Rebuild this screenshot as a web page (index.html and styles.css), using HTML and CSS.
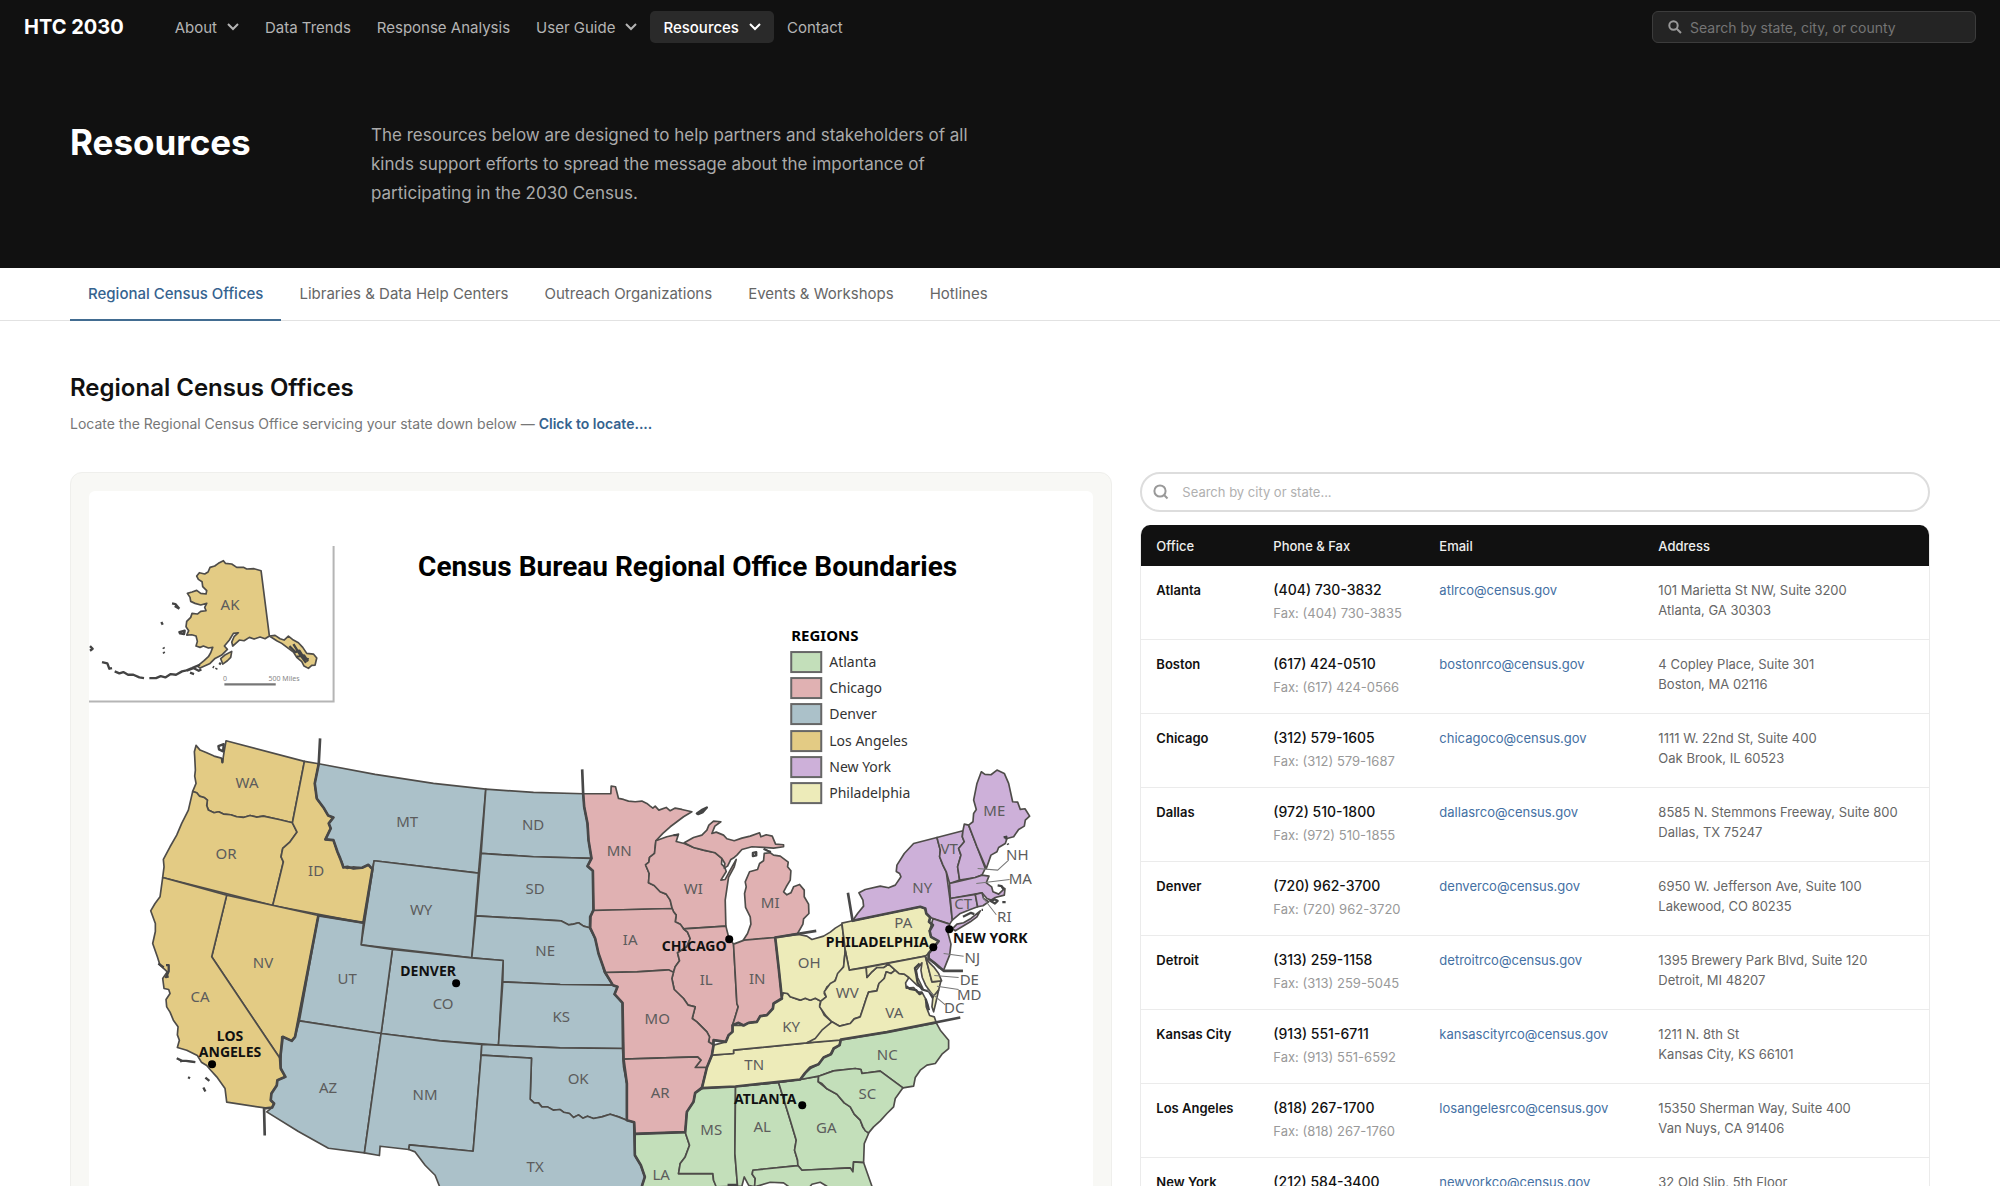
FILE: index.html
```html
<!DOCTYPE html>
<html lang="en">
<head>
<meta charset="utf-8">
<meta name="viewport" content="width=device-width, initial-scale=1">
<title>Resources – HTC 2030</title>
<link rel="stylesheet" href="styles.css">
</head>
<body>
<header class="topbar">
  <a class="brand" href="#">HTC 2030</a>
  <nav class="nav" aria-label="Main">
    <button class="nav-item" type="button">About <svg class="chevron" viewBox="0 0 12 8"><path d="M1 1l5 5 5-5"/></svg></button>
    <a class="nav-item" href="#">Data Trends</a>
    <a class="nav-item" href="#">Response Analysis</a>
    <button class="nav-item" type="button">User Guide <svg class="chevron" viewBox="0 0 12 8"><path d="M1 1l5 5 5-5"/></svg></button>
    <button class="nav-item is-active" type="button">Resources <svg class="chevron" viewBox="0 0 12 8"><path d="M1 1l5 5 5-5"/></svg></button>
    <a class="nav-item" href="#">Contact</a>
  </nav>
  <label class="site-search">
    <svg class="site-search-icon" viewBox="0 0 14 14"><circle cx="5.5" cy="5.5" r="4.2"/><path d="M8.7 8.7L13 13"/></svg>
    <input type="search" placeholder="Search by state, city, or county" aria-label="Search by state, city, or county">
  </label>
</header>

<section class="hero">
  <h1>Resources</h1>
  <p>The resources below are designed to help partners and stakeholders of all kinds support efforts to spread the message about the importance of participating in the 2030 Census.</p>
</section>

<nav class="tabs" aria-label="Resources">
  <a class="tab is-current" href="#">Regional Census Offices</a>
  <a class="tab" href="#">Libraries &amp; Data Help Centers</a>
  <a class="tab" href="#">Outreach Organizations</a>
  <a class="tab" href="#">Events &amp; Workshops</a>
  <a class="tab" href="#">Hotlines</a>
</nav>

<main class="content">
  <h2>Regional Census Offices</h2>
  <p class="lead">Locate the Regional Census Office servicing your state down below — <a href="#">Click to locate....</a></p>

  <div class="columns">
    <figure class="map-card">
      <svg class="map" viewBox="89 491 1004 760" role="img" aria-label="Census Bureau Regional Office Boundaries">
        <path class="inset" d="M333.500 546V701.500H89"/>
        <g transform="translate(80 540) scale(.33333)">
          <path class="state la" d="M430 62L436 70 455 72 470 82 490 82 500 87 522 86 543 92 568 288 555 296 540 291 522 297 508 292 492 302 478 300 458 318 455 306 462 290 475 278 460 280 448 300 433 318 442 328 425 345 405 355 390 370 360 384 352 378 372 362 385 350 392 338 398 322 385 324 370 318 360 322 348 318 352 304 348 288 335 284 320 285 326 272 318 260 320 244 332 232 336 220 352 222 362 214 378 212 374 202 380 190 362 195 345 190 332 184 330 172 322 160 336 156 350 151 362 160 378 162 380 152 368 140 366 125 355 118 350 108 358 98 374 102 384 96 390 82 404 78 415 70Z"/>
          <path class="state la" d="M568 288L585 286 600 296 612 300 625 288 640 300 655 308 668 322 680 340 700 342 710 354 705 375 695 376 685 385 672 378 665 365 650 352 640 336 625 325 605 310 590 302Z"/>
          <path class="state la" d="M422 356L436 344 455 334 452 352 442 362 428 372Z"/>
          <path class="islands" d="M628 318l18 18 12-4 14 22 14 4M640 312l16 26 22 30M650 350l22-4 12 18"/>
          <path class="islands" d="M298 276l16-4-2 10-12-2zM276 190l10 2 12 14M284 198l14 8M244 246l4 8M250 322l2 4M250 336l3 4M30 318l8 8-8 6M66 366l16 4 6 16 8-2M104 394l14 6 12-4 14 8 16 0 18 8 14 2M208 414l20 0 14-6 14 4 16-10 16 2 18-10 10-2 20-8 14-6 10-4M320 392l20-8 16 8 8-4M330 398l12 4M398 380l4 2M410 384l-2 4M418 374l4-6"/>
          <path class="scale-bar" d="M433 433H587"/>
        </g>

        <g transform="translate(60 720) scale(.33333)">
          <path class="state la" d="M408 76L420 90 440 98 462 108 484 114 487 128 492 96 498 62 733 124 697 308 660 299 610 288 590 291 570 286 550 292 530 290 512 284 490 282 476 275 462 278 445 270 440 256 442 240 432 232 418 228 410 218 398 214 408 190 404 168 406 150 404 110 403 95Z"/>
          <path class="state la" d="M398 214L410 218 418 228 432 232 442 240 440 256 445 270 462 278 476 275 490 282 512 284 530 290 550 292 570 286 590 291 610 288 660 299 697 308 711 336 690 365 668 385 663 410 670 425 638 556 308 472 312 440 310 418 330 380 350 345 365 310 385 270Z"/>
          <path class="state la" d="M733 124L776 131 764 190 770 235 790 262 804 286 820 292 806 310 812 325 796 358 820 360 832 395 840 414 846 426 850 442 862 440 880 445 906 443 925 434 937 447 910 608 638 556 670 425 663 410 668 385 690 365 711 336 697 308Z"/>
          <path class="state la" d="M500 525L775 586 705 950 695 962 668 950 660 1015 455 710Z"/>
          <path class="state la" d="M308 472L500 525 455 710 660 1015 662 1045 676 1070 652 1080 650 1096 634 1120 632 1140 642 1150 636 1162 620 1164 500 1146 495 1105 470 1070 452 1050 440 1036 424 1026 412 1006 380 990 352 982 358 960 352 944 354 920 340 900 330 876 320 860 318 838 330 820 326 808 312 805 308 775 322 755 300 735 292 710 278 670 286 634 286 610 272 572 285 550 300 530Z"/>
          <path class="islands" d="M475 78l16-6-2 22-12-6zM487 114v14M318 735l8 0 0 18-8 18 8-2M295 730l16 12M350 1014l16 8 12 0 14 2 14 2M366 1022l-6 2M384 1071l6 3M436 1072l12 10M430 1102l6 12"/>
        </g>

        <g transform="translate(300 720) scale(.33333)">
          <path class="state den" d="M56 131L225 163 400 190 557 207 535 459 222 422 217 447 205 434 186 443 160 440 142 445 130 440 126 426 120 414 112 395 100 360 76 358 92 325 86 310 100 292 84 286 70 262 50 235 44 190Z"/>
          <path class="state den" d="M222 422L535 459 515 713 183 674Z"/>
          <path class="state den" d="M557 207L700 217 850 221 852 260 862 310 865 360 874 415 700 410 543 400Z"/>
          <path class="state den" d="M543 400L700 410 874 415 862 438 878 452 880 570 870 590 868 623 850 618 835 608 820 612 805 614 782 602 527 587Z"/>
          <path class="state den" d="M527 587L782 602 805 614 820 612 835 608 850 618 868 623 885 655 900 700 912 755 938 795 780 793 608 785 609 721 515 713Z"/>
          <path class="state den" d="M277 688L515 713 609 721 595 975 420 962 243 940Z"/>
          <path class="state den" d="M608 785L780 793 938 795 955 800 943 822 967 848 967 985 780 983 595 975Z"/>
          <path class="state den" d="M55 586L190 608 183 674 277 688 243 940 -2 902Z"/>
          <path class="state den" d="M-2 902L243 940 193 1298 85 1284 -5 1234 -100 1175 -84 1162 -78 1150 -88 1140 -86 1120 -70 1096 -68 1080 -44 1070 -58 1045 -55 950 -25 962 -15 950Z"/>
          <path class="state den" d="M243 940L420 962 545 973 543 1005 519 1293 328 1274 326 1288 240 1278 238 1306 193 1298Z"/>
          <path class="state den" d="M545 973L780 983 967 985 970 1040 980 1090 980 1200 955 1190 930 1182 905 1190 880 1195 862 1188 848 1194 835 1184 820 1192 808 1180 790 1176 780 1168 760 1170 742 1160 725 1160 715 1148 702 1148 690 1137 694 1014 543 1005Z"/>
          <path class="state den" d="M543 1005L694 1014 690 1137 702 1148 715 1148 725 1160 742 1160 760 1170 780 1168 790 1176 808 1180 820 1192 835 1184 848 1194 862 1188 880 1195 905 1190 930 1182 955 1190 980 1200 1002 1206 1004 1305 1022 1335 1034 1370 1025 1398 1020 1440 940 1500 860 1560 840 1650 850 1700 780 1680 720 1560 660 1480 600 1470 560 1510 500 1470 450 1440 418 1398 405 1365 375 1335 345 1295 326 1288 328 1274 519 1293Z"/>
        </g>

        <g transform="translate(560 720) scale(.33333)">
          <path class="state chi" d="M69 221L152 221 153 198 166 200 175 235 190 238 205 243 225 245 245 243 260 250 270 258 278 264 285 258 296 270 318 262 330 272 345 264 365 268 395 275 370 290 350 305 330 320 308 340 287 362 283 400 268 412 266 426 256 434 267 460 265 488 282 496 300 515 318 522 330 540 336 565 100 571 98 452 82 438 94 415 85 360 82 310 72 260Z"/>
          <path class="state chi" d="M287 362L320 350 355 342 348 364 372 370 400 382 430 390 465 398 485 415 484 432 494 442 498 454 482 480 495 478 510 450 528 418 522 440 505 472 495 540 497 618 370 626 360 612 345 605 348 585 340 575 336 565 330 540 318 522 300 515 282 496 265 488 267 460 256 434 266 426 268 412 283 400Z"/>
          <path class="state chi" d="M372 368L400 352 425 345 440 330 446 315 460 303 482 305 464 318 455 340 468 336 490 345 500 356 522 362 545 354 570 348 598 338 602 350 618 344 636 348 646 372 670 374 670 380 640 384 610 382 575 380 545 388 530 405 522 412 512 418 502 438 492 444 494 430 485 415 465 398 430 390 400 382Z"/>
          <path class="state chi" d="M548 662L562 640 572 612 570 590 556 562 553 520 558 500 555 485 568 455 592 448 598 430 610 422 612 400 630 398 640 405 660 408 684 426 682 440 692 452 690 480 678 500 670 515 680 524 692 518 700 500 718 493 732 510 732 530 745 552 746 580 730 596 728 612 712 640 645 652Z"/>
          <path class="state chi" d="M98 571L336 565 340 575 348 585 345 605 360 612 370 626 382 636 390 655 380 680 352 698 358 722 345 740 340 756 335 760 325 749 230 755 135 757 115 700 105 655 90 623 92 590Z"/>
          <path class="state chi" d="M370 626L497 618 505 650 520 672 525 760 530 850 534 860 525 890 517 915 517 935 505 945 497 965 460 960 458 972 445 965 448 950 440 935 410 905 396 895 405 860 384 855 370 835 342 808 335 775 340 756 345 740 358 722 352 698 380 680 390 655 382 636Z"/>
          <path class="state chi" d="M520 672L552 660 645 652 655 740 665 835 640 850 638 865 620 885 600 888 590 905 565 908 550 916 535 908 517 915 525 890 534 860 530 850Z"/>
          <path class="state chi" d="M135 757L230 755 325 749 340 756 335 775 342 808 370 835 384 855 405 860 396 895 410 905 440 935 448 950 445 965 460 975 455 1005 440 1042 405 1042 422 1020 412 1010 190 1017 187 848 163 822 172 800 158 795Z"/>
          <path class="state chi" d="M190 1017L412 1010 422 1020 405 1042 440 1042 425 1100 405 1118 400 1145 380 1175 375 1236 225 1241 222 1206 200 1200 200 1090 192 1040Z"/>
          <path class="state atl" d="M225 1241L375 1236 388 1275 375 1310 360 1330 355 1360 458 1360 460 1380 470 1400 480 1450 400 1470 245 1440 245 1398 254 1370 242 1335 224 1305Z"/>
          <path class="state atl" d="M425 1104L526 1099 524 1300 532 1398 468 1400 460 1380 458 1360 355 1360 360 1330 375 1310 388 1275 375 1236 380 1175 400 1145 405 1118Z"/>
          <path class="state atl" d="M526 1099L655 1087 690 1200 708 1260 703 1290 712 1320 713 1336 578 1350 576 1362 585 1375 583 1400 565 1395 552 1370 545 1398 532 1398 524 1300Z"/>
          <path class="state atl" d="M655 1087L720 1078 775 1068 774 1085 800 1106 830 1122 852 1148 870 1160 882 1182 900 1200 908 1222 925 1240 912 1270 910 1327 880 1325 878 1355 870 1343 725 1350 713 1336 712 1320 703 1290 708 1260 690 1200Z"/>
          <path class="state atl" d="M578 1350L713 1336 725 1350 870 1343 878 1355 880 1325 910 1327 935 1398 980 1500 960 1600 880 1520 840 1440 800 1398 780 1386 755 1392 740 1410 700 1410 670 1388 630 1386 583 1400 585 1375 576 1362Z"/>
          <path class="state phi" d="M455 1005L520 1000 520 990 740 968 842 958 838 975 820 985 812 1002 790 1012 775 1032 750 1042 735 1058 720 1078 655 1087 526 1099 425 1104 440 1042Z"/>
          <path class="state phi" d="M460 975L497 965 505 945 517 935 517 915 550 916 565 908 590 905 600 888 620 885 638 865 640 850 665 835 668 818 682 820 690 830 720 840 735 834 750 840 765 834 782 843 778 855 792 885 815 905 800 920 785 945 760 962 740 968 520 990 520 1000 455 1005Z"/>
          <path class="state phi" d="M645 652L715 643 740 648 755 658 790 648 810 636 825 624 845 612 855 690 850 740 830 770 822 785 800 800 792 820 798 830 782 843 765 834 750 840 735 834 720 840 690 830 682 820 668 818 665 835 655 740Z"/>
          <path class="islands" d="M410 280l14-10 16-8-12 14-14 6zM578 398l10-2 0 10-10 2zM610 386l12 6 10 4M340 345l14 0M502 1394l30 0"/>
        </g>

        <g transform="translate(780 740) scale(.33333)">
          <path class="state phi" d="M185 549L217 542 420 500 435 505 438 520 450 532 446 545 458 555 448 572 452 590 475 603 462 620 445 640 435 648 207 690 195 630Z"/>
          <path class="state phi" d="M195 630L207 690 258 682 260 712 275 695 290 682 310 682 325 672 345 690 332 700 318 695 312 715 296 730 290 752 265 756 258 775 250 800 240 830 222 836 210 850 178 858 155 845 138 828 118 800 122 783 138 770 132 755 150 730 165 722 172 700 190 680Z"/>
          <path class="state phi" d="M345 690L356 700 372 702 386 712 376 728 378 744 400 742 410 755 425 756 436 776 438 800 448 826 462 830 468 848 320 876 180 900 80 908 105 895 125 870 155 845 178 858 210 850 222 836 240 830 250 800 258 775 265 756 290 752 296 730 312 715 318 695 332 700Z"/>
          <path class="state phi" d="M258 682L435 648 455 725 482 722 475 750 462 770 450 755 436 735 426 712 422 690 425 668 408 690 412 712 428 745 410 735 386 712 372 702 356 700 345 690 325 672 310 682 290 682 275 695 260 712Z"/>
          <path class="state phi" d="M435 648L446 666 460 680 475 700 484 722 455 725Z"/>
          <path class="state phi" d="M475 750L466 790 460 815 455 800 458 770Z"/>
          <path class="state atl" d="M468 848L480 870 505 900 505 925 485 942 465 970 440 975 420 990 405 1012 400 1038 368 1043 300 993 245 1000 242 988 225 985 160 992 115 1008 60 1018 75 998 90 985 115 972 130 952 155 940 162 925 178 915 180 900 320 876Z"/>
          <path class="state atl" d="M115 1008L160 992 225 985 242 988 245 1000 300 993 368 1043 345 1075 340 1100 320 1120 300 1142 280 1160 265 1178 255 1172 248 1160 240 1140 222 1122 210 1100 192 1088 170 1062 140 1046 125 1030 114 1025Z"/>
          <path class="state ny" d="M217 542L232 520 250 498 248 480 236 458 255 448 300 438 325 443 345 435 362 410 358 400 348 394 350 375 372 340 400 310 470 292 480 330 478 350 488 375 498 395 508 470 516 540 508 552 450 532 438 520 435 505 420 500Z"/>
          <path class="state ny" d="M516 566L530 552 550 548 572 535 600 512 590 530 570 545 545 560 525 572Z"/>
          <path class="state ny" d="M458 536L508 552 502 575 512 612 508 645 490 690 475 682 462 668 445 655 445 640 475 603 452 590 448 572Z"/>
          <path class="state ny" d="M470 292L548 272 546 290 552 305 535 325 542 345 532 380 538 420 508 430 498 395 488 375 478 350 480 330Z"/>
          <path class="state ny" d="M548 272L552 252 565 255 590 320 615 385 605 405 585 412 538 420 532 380 542 345 535 325 552 305 546 290Z"/>
          <path class="state ny" d="M565 255L578 245 580 220 588 208 580 180 590 130 603 95 614 103 632 104 650 90 672 100 685 130 697 185 712 186 720 208 734 206 748 228 735 240 732 258 715 268 700 290 680 295 675 310 655 322 650 335 632 345 618 385 590 320Z"/>
          <path class="state ny" d="M508 430L585 412 605 405 626 408 618 428 634 440 638 455 655 462 670 448 664 440 674 446 672 465 645 472 632 480 620 475 605 458 510 475Z"/>
          <path class="state ny" d="M510 475L585 463 592 500 570 508 540 520 516 540Z"/>
          <path class="state ny" d="M585 463L605 458 610 475 625 485 608 497 592 500Z"/>
          <path class="islands" d="M652 436l12 2 6 10M630 482l14-4 8 4-8 8zM666 486l10 0M604 509l4 0M548 530l24-12 10 4M670 292l8-2 0 8M682 310l2 4M418 670l-14 14 4 20 4 24 14 20 20 6 12 20M378 738l10 8 20 4 10 12 8-4M436 776l6 18 4 16"/>
          <path class="leader" d="M592 385L652 390 685 360M588 430L688 418M606 470L648 524M490 640L550 648M462 706L535 712M470 738L535 748M440 748L495 794"/>
        </g>

        <g transform="translate(560 720) scale(.33333)">
          <path class="border" d="M66 148L69 221 72 260 82 310 85 360 94 415 82 438 98 452 100 570 90 590 90 623 105 655 115 700 135 757 158 795 172 800 163 822 187 848 190 1017 200 1090 200 1200 222 1206 224 1305 242 1335 254 1370 245 1398"/>
          <path class="border" d="M768 632L645 652 655 740 665 835 640 850 638 865 620 885 600 888 590 905 565 908 550 916 535 908 517 915 517 935 505 945 497 965 460 960 460 975 455 1005 440 1042 425 1104 405 1118 400 1145 380 1175 375 1236 225 1241"/>
          <path class="border" d="M425 1104L526 1099 720 1078 735 1058 750 1042 775 1032 790 1012 812 1002 820 985 838 975 842 958 980 936 1200 892"/>
          <path class="border" d="M863 518L877 602 1080 560 1095 565 1098 580 1110 592 1106 605 1118 615 1108 632 1112 650 1135 663 1122 680 1105 700 1105 715 1122 728 1150 752 1208 752"/>
          <path class="border" d="M-720 55L-724 131 -736 190 -730 235 -710 262 -696 286 -680 292 -694 310 -688 325 -704 358 -680 360 -668 395 -660 414 -650 442 -638 440 -620 445 -594 443 -575 434 -563 447 -590 608 -725 586 -795 950 -805 962 -832 950 -840 1015 -838 1045 -824 1070 -848 1080 -850 1096 -866 1120 -868 1140 -858 1150 -864 1162 -888 1165 -886 1246"/>
        </g>

        <g class="dots">
          <circle cx="212" cy="1064" r="4"/><circle cx="456" cy="983" r="4"/><circle cx="729" cy="939" r="4"/><circle cx="802" cy="1105" r="4"/><circle cx="949" cy="929" r="4"/><circle cx="933" cy="947" r="4"/>
        </g>

        <g class="abbr">
          <text x="230" y="610">AK</text>
          <text x="247" y="788">WA</text><text x="226" y="859">OR</text><text x="316" y="876">ID</text><text x="263" y="968">NV</text><text x="200" y="1002">CA</text>
          <text x="347" y="984">UT</text><text x="328" y="1093">AZ</text><text x="407" y="827">MT</text><text x="533" y="830">ND</text><text x="535" y="894">SD</text><text x="421" y="915">WY</text><text x="545" y="956">NE</text><text x="443" y="1009">CO</text><text x="561" y="1022">KS</text><text x="578" y="1084">OK</text><text x="425" y="1100">NM</text><text x="535" y="1172">TX</text>
          <text x="619" y="856">MN</text><text x="693" y="894">WI</text><text x="770" y="908">MI</text><text x="630" y="945">IA</text><text x="706" y="985">IL</text><text x="757" y="984">IN</text><text x="657" y="1024">MO</text><text x="660" y="1098">AR</text>
          <text x="791" y="1032">KY</text><text x="754" y="1070">TN</text><text x="809" y="968">OH</text><text x="847" y="998">WV</text><text x="903" y="928">PA</text><text x="894" y="1018">VA</text>
          <text x="711" y="1135">MS</text><text x="762" y="1132">AL</text><text x="826" y="1133">GA</text><text x="661" y="1180">LA</text><text x="867" y="1099">SC</text><text x="887" y="1060">NC</text>
          <text x="922" y="893">NY</text><text x="949" y="854">VT</text><text x="994" y="816">ME</text><text x="963" y="909">CT</text><text x="1017" y="860">NH</text><text x="1020" y="884">MA</text><text x="1004" y="922">RI</text><text x="972" y="963">NJ</text><text x="969" y="985">DE</text><text x="969" y="1000">MD</text><text x="954" y="1013">DC</text>
        </g>
        <g class="city">
          <text x="230" y="1041">LOS</text><text x="230" y="1057">ANGELES</text><text x="428" y="976">DENVER</text><text x="694" y="951">CHICAGO</text><text x="765" y="1104">ATLANTA</text><text x="877" y="947">PHILADELPHIA</text><text x="990" y="943">NEW YORK</text>
        </g>
        <g class="scale-text"><text x="225" y="681">0</text><text x="284" y="681">500 Miles</text></g>

        <text class="map-title" x="418" y="576">Census Bureau Regional Office Boundaries</text>
        <text class="legend-title" x="791" y="641">REGIONS</text>
        <g class="legend">
          <rect class="atl" x="791" y="652" width="30" height="20"/><text x="829" y="667">Atlanta</text>
          <rect class="chi" x="791" y="678" width="30" height="20"/><text x="829" y="693">Chicago</text>
          <rect class="den" x="791" y="704" width="30" height="20"/><text x="829" y="719">Denver</text>
          <rect class="la" x="791" y="731" width="30" height="20"/><text x="829" y="746">Los Angeles</text>
          <rect class="ny" x="791" y="757" width="30" height="20"/><text x="829" y="772">New York</text>
          <rect class="phi" x="791" y="783" width="30" height="20"/><text x="829" y="798">Philadelphia</text>
        </g>
      </svg>
    </figure>

    <section class="offices" aria-label="Offices">
      <label class="office-search">
        <svg class="office-search-icon" viewBox="0 0 16 16"><circle cx="7" cy="7" r="5.600"/><path d="M11.300 11.300L14.500 14.500"/></svg>
        <input type="search" placeholder="Search by city or state..." aria-label="Search by city or state">
      </label>
      <div class="table-wrap">
        <table>
          <thead>
            <tr><th class="col-office">Office</th><th class="col-phone">Phone &amp; Fax</th><th class="col-email">Email</th><th>Address</th></tr>
          </thead>
          <tbody>
            <tr><th scope="row">Atlanta</th><td class="phone">(404) 730-3832<span class="fax">Fax: (404) 730-3835</span></td><td><a href="#">atlrco@census.gov</a></td><td>101 Marietta St NW, Suite 3200<br>Atlanta, GA 30303</td></tr>
            <tr><th scope="row">Boston</th><td class="phone">(617) 424-0510<span class="fax">Fax: (617) 424-0566</span></td><td><a href="#">bostonrco@census.gov</a></td><td>4 Copley Place, Suite 301<br>Boston, MA 02116</td></tr>
            <tr><th scope="row">Chicago</th><td class="phone">(312) 579-1605<span class="fax">Fax: (312) 579-1687</span></td><td><a href="#">chicagoco@census.gov</a></td><td>1111 W. 22nd St, Suite 400<br>Oak Brook, IL 60523</td></tr>
            <tr><th scope="row">Dallas</th><td class="phone">(972) 510-1800<span class="fax">Fax: (972) 510-1855</span></td><td><a href="#">dallasrco@census.gov</a></td><td>8585 N. Stemmons Freeway, Suite 800<br>Dallas, TX 75247</td></tr>
            <tr><th scope="row">Denver</th><td class="phone">(720) 962-3700<span class="fax">Fax: (720) 962-3720</span></td><td><a href="#">denverco@census.gov</a></td><td>6950 W. Jefferson Ave, Suite 100<br>Lakewood, CO 80235</td></tr>
            <tr><th scope="row">Detroit</th><td class="phone">(313) 259-1158<span class="fax">Fax: (313) 259-5045</span></td><td><a href="#">detroitrco@census.gov</a></td><td>1395 Brewery Park Blvd, Suite 120<br>Detroit, MI 48207</td></tr>
            <tr><th scope="row">Kansas City</th><td class="phone">(913) 551-6711<span class="fax">Fax: (913) 551-6592</span></td><td><a href="#">kansascityrco@census.gov</a></td><td>1211 N. 8th St<br>Kansas City, KS 66101</td></tr>
            <tr><th scope="row">Los Angeles</th><td class="phone">(818) 267-1700<span class="fax">Fax: (818) 267-1760</span></td><td><a href="#">losangelesrco@census.gov</a></td><td>15350 Sherman Way, Suite 400<br>Van Nuys, CA 91406</td></tr>
            <tr><th scope="row">New York</th><td class="phone">(212) 584-3400</td><td><a href="#">newyorkco@census.gov</a></td><td>32 Old Slip, 5th Floor</td></tr>
          </tbody>
        </table>
      </div>
    </section>
  </div>
</main>
</body>
</html>
```
FILE: styles.css
```css
* { box-sizing: border-box; }

body {
  margin: 0;
  background: #fff;
  color: #111;
  font-family: Inter, "Liberation Sans", sans-serif;
  font-size: 14px;
}

a { color: inherit; text-decoration: none; }
button, input { font: inherit; }

/* Top bar */
.topbar {
  display: flex;
  align-items: center;
  height: 54px;
  padding: 0 24px;
  background: #111;
}
.brand { margin-right: 38px; color: #fff; font-size: 20px; font-weight: 700; }
.nav { display: flex; align-items: center; }
.nav-item {
  display: flex;
  align-items: center;
  gap: 10px;
  height: 32px;
  padding: 0 13px;
  border: 0;
  border-radius: 5px;
  background: none;
  color: #b4b4b4;
  font-size: 15px;
  font-weight: 400;
  white-space: nowrap;
}
.nav-item.is-active { background: #2a2a2a; color: #fff; font-weight: 500; }
.chevron { width: 12px; height: 8px; fill: none; stroke: currentColor; stroke-width: 2; }
.site-search {
  display: flex;
  align-items: center;
  gap: 8px;
  width: 324px;
  height: 32px;
  margin-left: auto;
  padding: 0 15px;
  border: 1px solid #3c3c3c;
  border-radius: 6px;
  background: #242424;
}
.site-search-icon { width: 14px; height: 14px; fill: none; stroke: #999; stroke-width: 2; }
.site-search input, .office-search input {
  flex: 1;
  min-width: 0;
  padding: 0;
  border: 0;
  outline: 0;
  background: none;
}
.site-search input { color: #fff; font-size: 14px; }
.site-search input::placeholder { color: #757575; opacity: 1; }

/* Hero */
.hero {
  display: grid;
  grid-template-columns: 181px 1fr;
  gap: 120px;
  padding: 67px 70px 60px;
  background: #111;
}
.hero h1 { margin: 0; color: #fff; font-size: 35px; line-height: 42px; font-weight: 700; }
.hero p { max-width: 600px; margin: 0; color: #aaa; font-size: 17px; line-height: 29px; }

/* Tabs */
.tabs { display: flex; height: 53px; padding: 0 70px; border-bottom: 1px solid #e2e2e2; }
.tab {
  display: flex;
  align-items: center;
  margin-bottom: -1px;
  padding: 0 18px;
  border-bottom: 2px solid transparent;
  color: #666;
  font-size: 15px;
}
.tab.is-current { border-color: #426c91; color: #35638f; font-weight: 500; }

/* Content */
.content { padding: 50px 70px 60px; }
.content h2 { margin: 0; font-size: 24px; line-height: 34px; font-weight: 600; }
.lead { margin: 8px 0 37px; color: #777; line-height: 22px; }
.lead a { color: #35638f; font-weight: 600; }
.columns { display: grid; grid-template-columns: 1.32fr 1fr; gap: 28px; align-items: start; }

/* Map */
.map-card {
  margin: 0;
  padding: 18px;
  border: 1px solid #efefec;
  border-radius: 12px;
  background: #f8f8f5;
}
.map { display: block; width: 100%; border-radius: 6px; background: #fff; font-family: "Noto Sans", sans-serif; }
.atl { fill: #c3dfba; }
.chi { fill: #e0b1b2; }
.den { fill: #abc1c9; }
.la { fill: #e3cb84; }
.ny { fill: #cdb0d9; }
.phi { fill: #edebb9; }
.state { stroke: #4e4c49; stroke-width: 5; stroke-linejoin: round; }
.border { fill: none; stroke: #484848; stroke-width: 8; stroke-linejoin: round; }
.islands { fill: none; stroke: #444; stroke-width: 7; stroke-linejoin: round; }
.scale-bar { stroke: #777; stroke-width: 7; }
.leader { fill: none; stroke: #777; stroke-width: 3; }
.inset { fill: none; stroke: #b5b5b5; stroke-width: 2; }
.abbr { fill: #5c5c5c; font-size: 15px; text-anchor: middle; }
.city { fill: #111; font-size: 14px; font-weight: 700; text-anchor: middle; }
.scale-text { fill: #888; font-size: 7px; text-anchor: middle; }
.map-title { font-family: Roboto, sans-serif; font-size: 28px; font-weight: 700; }
.legend-title { font-size: 15px; font-weight: 700; }
.legend rect { stroke: #666; stroke-width: 2; }
.legend text { fill: #333; font-size: 14px; }

/* Office directory */
.office-search {
  display: flex;
  align-items: center;
  gap: 13px;
  height: 40px;
  margin-bottom: 13px;
  padding: 0 11px;
  border: 2px solid #ddd;
  border-radius: 20px;
}
.office-search-icon { width: 16px; height: 16px; fill: none; stroke: #999; stroke-width: 2; }
.office-search input { font-size: 13px; }
.office-search input::placeholder { color: #b0b0b0; opacity: 1; }
.table-wrap { overflow: hidden; border: 1px solid #ebebeb; border-top: 0; border-radius: 10px; }
table { width: 100%; border-spacing: 0; table-layout: fixed; }
.col-office { width: 117px; }
.col-phone { width: 166px; }
.col-email { width: 219px; }
thead th {
  height: 41px;
  padding: 0 15px;
  background: #111;
  color: #eee;
  font-size: 13px;
  font-weight: 500;
  text-align: left;
}
tbody th, tbody td {
  height: 74px;
  padding: 14px 0 0 15px;
  border-bottom: 1px solid #ebebeb;
  font-size: 13px;
  line-height: 20px;
  text-align: left;
  vertical-align: top;
  white-space: nowrap;
}
tbody th { font-weight: 600; }
tbody td { color: #666; }
tbody td a { color: #4470a3; }
tbody .phone { color: #111; font-size: 14px; font-weight: 500; }
.fax { display: block; padding-top: 3px; color: #999; font-size: 13px; font-weight: 400; }
```
